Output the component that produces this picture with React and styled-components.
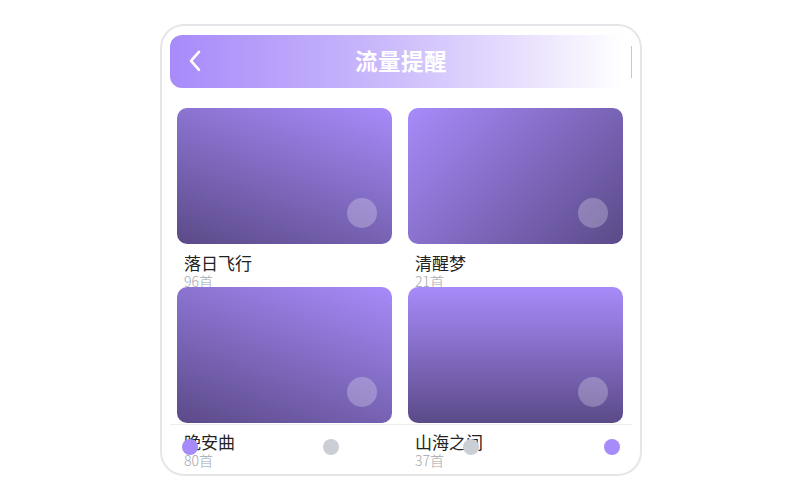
import React from "react";
import styled, { createGlobalStyle } from "styled-components";

const Global = createGlobalStyle`
  html, body { margin: 0; padding: 0; background: #ffffff; }
  body { font-family: "Noto Sans CJK SC", "Noto Sans", sans-serif; }
  * { box-sizing: border-box; }
`;

const Page = styled.div`
  width: 800px;
  height: 500px;
  padding-top: 24px;
  padding-left: 160px;
`;

const Frame = styled.div`
  position: relative;
  width: 482px;
  height: 452px;
  border: 2px solid #e6e6ea;
  border-radius: 24px;
  overflow: hidden;
  background: #ffffff;
  padding: 9px 8px 0 8px;
`;

const Header = styled.div`
  height: 53px;
  width: 462px;
  border-radius: 12px;
  background: linear-gradient(90deg, #a78bfa 0%, #c9b8fb 45%, #e7defd 75%, #ffffff 98%);
  display: flex;
  align-items: center;
  justify-content: center;
  padding-bottom: 4px;
  position: relative;

  &::after {
    content: "";
    position: absolute;
    right: 0;
    top: 11px;
    bottom: 10px;
    width: 1px;
    background: #c9bcfb;
  }
`;

const Back = styled.button`
  position: absolute;
  left: 16px;
  top: 50%;
  transform: translateY(-55%);
  background: none;
  border: none;
  padding: 0;
  width: 18px;
  height: 24px;
  display: flex;
  align-items: center;
  justify-content: center;
`;

const Title = styled.h1`
  margin: 0;
  color: #ffffff;
  font-size: 22.5px;
  line-height: 28px;
  font-weight: 700;
  letter-spacing: 0.5px;
`;

const Grid = styled.div`
  display: grid;
  grid-template-columns: 215px 215px;
  column-gap: 16px;
  padding: 20px 0 0 7px;
`;

const Item = styled.div`
  height: 179px;
  display: flex;
  flex-direction: column;
`;

const Cover = styled.div`
  position: relative;
  height: 136px;
  flex: none;
  border-radius: 10px;
  background: linear-gradient(${(p) => p.$angle}, #a78bfa 0%, #5b4a88 100%);
`;

const Dot = styled.span`
  position: absolute;
  right: 15px;
  bottom: 16px;
  width: 30px;
  height: 30px;
  border-radius: 50%;
  background: rgba(255, 255, 255, 0.25);
`;

const Name = styled.div`
  margin-top: 9px;
  padding-left: 7px;
  font-size: 17px;
  line-height: 20px;
  color: #222222;
  font-weight: 400;
`;

const Count = styled.div`
  padding-left: 7px;
  font-size: 14px;
  line-height: 16px;
  color: #a3a7ae;
  font-weight: 300;
`;

const Nav = styled.div`
  position: absolute;
  left: 8px;
  right: 8px;
  bottom: 0;
  height: 50px;
  border-top: 1px solid #ececef;
  display: flex;
  align-items: center;
  justify-content: space-between;
  padding: 0 12px 6px 12px;
`;

const NavDot = styled.span`
  width: 16px;
  height: 16px;
  border-radius: 50%;
  background: ${(p) => (p.$active ? "#a78bfa" : "#cbcfd5")};
`;

const items = [
  { name: "落日飞行", count: "96首", angle: "200deg" },
  { name: "清醒梦", count: "21首", angle: "135deg" },
  { name: "晚安曲", count: "80首", angle: "200deg" },
  { name: "山海之间", count: "37首", angle: "180deg" },
];

export default function App() {
  return (
    <>
      <Global />
      <Page>
        <Frame>
          <Header>
            <Back aria-label="返回">
              <svg width="12" height="22" viewBox="0 0 12 22" fill="none">
                <path d="M10 2 L2 11 L10 20" stroke="#ffffff" strokeWidth="2.6" strokeLinecap="round" strokeLinejoin="round" />
              </svg>
            </Back>
            <Title>流量提醒</Title>
          </Header>
          <Grid>
            {items.map((it) => (
              <Item key={it.name}>
                <Cover $angle={it.angle}>
                  <Dot />
                </Cover>
                <Name>{it.name}</Name>
                <Count>{it.count}</Count>
              </Item>
            ))}
          </Grid>
          <Nav>
            <NavDot $active />
            <NavDot />
            <NavDot />
            <NavDot $active />
          </Nav>
        </Frame>
      </Page>
    </>
  );
}
